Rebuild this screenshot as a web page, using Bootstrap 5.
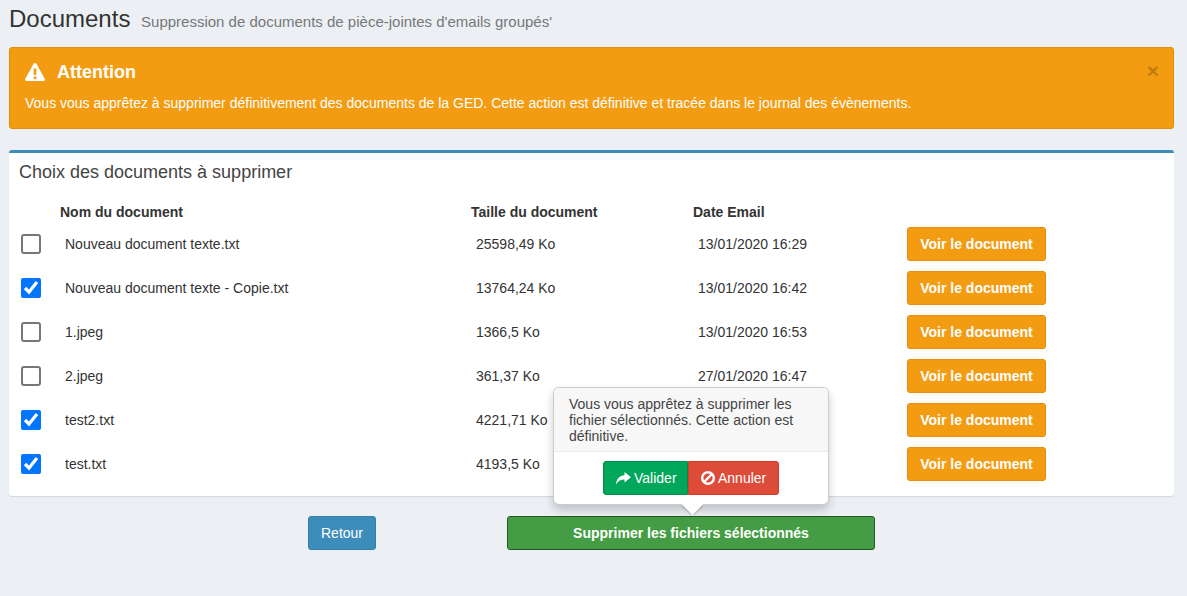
<!DOCTYPE html>
<html lang="fr">
<head>
<meta charset="utf-8">
<title>Documents</title>
<link href="https://cdn.jsdelivr.net/npm/bootstrap@5.3.0/dist/css/bootstrap.min.css" rel="stylesheet">
<style>
html,body{height:100%}
body{background:#ecf0f5;font-family:"Liberation Sans",Arial,sans-serif;font-size:14px;line-height:20px;color:#333}
.page-wrap{padding:6px 13px 0 9px}
.page-title{font-size:24px;line-height:26px;font-weight:400;margin:0;color:#333}
.page-title small{font-size:15px;color:#777;margin-left:4px;font-weight:400}
.warn-box{background:#f39c12;border:1px solid #e08e0b;border-radius:3px;color:#fff;margin:12px 0 21px;padding:14px 15px 15px;height:82px;position:relative}
.warn-title{font-size:18px;line-height:20px;font-weight:700;margin:0 0 11px;display:flex;align-items:center;gap:12px}
.warn-box p{margin:0}
.warn-close{position:absolute;top:11px;right:14px;background:none;border:0;padding:0;font-size:21px;line-height:24px;font-weight:700;color:#000;opacity:.2}
.doc-panel{background:#fff;border:0;border-top:3px solid #3c8dbc;border-radius:3px;box-shadow:0 1px 1px rgba(0,0,0,.1);height:346px;padding:0 10px}
.doc-panel h3{font-size:18px;line-height:20px;font-weight:400;color:#444;margin:0;padding:9px 0 0;height:49px}
.doc-table{table-layout:fixed;width:1040px;margin:0;--bs-table-bg:transparent;color:#333;border-collapse:collapse}
.doc-table th,.doc-table td{padding:0;border:0;vertical-align:middle;color:#333}
.doc-table th{height:20px;font-weight:700;line-height:20px}
.doc-table td{height:44px}
.doc-table td.cell-text{padding-left:5px}
.doc-table input{width:20px;height:20px;margin:0 0 0 2px;display:block}
.doc-table input:not(:checked){appearance:none;background:#fff;border:2px solid #767676;border-radius:3px}
.c-check{width:41px}.c-name{width:411px}.c-size{width:222px}.c-date{width:214px}
.btn-voir{--bs-btn-bg:#f39c12;--bs-btn-border-color:#e08e0b;--bs-btn-color:#fff;--bs-btn-hover-bg:#e08e0b;--bs-btn-hover-border-color:#e08e0b;--bs-btn-hover-color:#fff;font-size:14px;font-weight:700;line-height:20px;padding:6px 12px;border-radius:3px;width:139px;white-space:nowrap}
.action-row{margin:20px 0 0 299px;gap:131px}
.btn-retour{--bs-btn-bg:#3c8dbc;--bs-btn-border-color:#367fa9;--bs-btn-color:#fff;--bs-btn-hover-bg:#367fa9;--bs-btn-hover-color:#fff;font-size:14px;line-height:20px;padding:6px 12px;border-radius:3px;width:68px}
.btn-delete{--bs-btn-bg:#449d44;--bs-btn-border-color:#255625;--bs-btn-color:#fff;--bs-btn-hover-bg:#449d44;--bs-btn-hover-color:#fff;font-size:14px;font-weight:700;line-height:20px;padding:6px 12px;border-radius:3px;width:368px}
.delete-wrap{position:relative}
.confirm-pop{position:absolute;left:46px;bottom:45px;top:auto;width:276px;max-width:276px;font-family:"Liberation Sans",Arial,sans-serif;font-size:14px;line-height:16px;border:1px solid rgba(0,0,0,.2);border-radius:6px;box-shadow:0 5px 10px rgba(0,0,0,.2);background:#fff;color:#333}
.confirm-pop .popover-header{background:#f7f7f7;font-size:14px;font-weight:400;line-height:16px;padding:8px 14px 7px 15px;height:64px;color:#444;border-bottom:1px solid #ebebeb;border-radius:5px 5px 0 0;margin:0}
.confirm-pop .popover-header::before{display:none!important}
.confirm-pop .popover-body{padding:9px 0 0;height:52px;display:flex;justify-content:center;color:#333}
.pop-tip{position:absolute;left:127px;bottom:-11px;width:22px;height:11px;overflow:hidden}
.pop-tip::after{content:"";position:absolute;left:3.500px;top:-7.500px;width:15px;height:15px;background:#fff;transform:rotate(45deg);box-shadow:1px 1px 2px rgba(0,0,0,.25)}
.btn-ok,.btn-no{font-size:14px;line-height:20px;color:#fff;height:34px;display:inline-flex;align-items:center;gap:3px;white-space:nowrap}
.btn-ok{--bs-btn-bg:#00a65a;--bs-btn-border-color:#008d4c;--bs-btn-hover-bg:#008d4c;--bs-btn-color:#fff;--bs-btn-hover-color:#fff;border-radius:3px 0 0 3px;width:85px;padding:6px 0 6px 12px}
.btn-no{--bs-btn-bg:#dd4b39;--bs-btn-border-color:#d73925;--bs-btn-hover-bg:#d73925;--bs-btn-color:#fff;--bs-btn-hover-color:#fff;border-radius:0 3px 3px 0;width:91px;padding:6px 0 6px 12px}
</style>
</head>
<body>
<div class="page-wrap">
  <h1 class="page-title">Documents <small>Suppression de documents de pièce-jointes d'emails groupés'</small></h1>

  <div class="warn-box">
    <button type="button" class="warn-close" aria-label="Fermer">×</button>
    <h4 class="warn-title">
      <svg width="20" height="18" viewBox="0 0 20 18" aria-hidden="true"><path fill="#fff" fill-rule="evenodd" d="M10 0c.6 0 1.100.3 1.400.8l8.300 14.900c.6 1-.2 2.300-1.400 2.300H1.700C.5 18-.3 16.700.3 15.700L8.600.8C8.900.3 9.400 0 10 0zM8.500 5.500l.3 6.500h2.400l.3-6.500zM8.600 13.400v2.500h2.800v-2.500z"/></svg>
      Attention
    </h4>
    <p>Vous vous apprêtez à supprimer définitivement des documents de la GED. Cette action est définitive et tracée dans le journal des évènements.</p>
  </div>

  <div class="doc-panel">
    <h3>Choix des documents à supprimer</h3>
    <table class="table table-borderless doc-table">
      <thead>
        <tr><th class="c-check"></th><th class="c-name">Nom du document</th><th class="c-size">Taille du document</th><th class="c-date">Date Email</th><th></th></tr>
      </thead>
      <tbody>
        <tr><td><input type="checkbox" aria-label="Nouveau document texte.txt"></td><td class="cell-text">Nouveau document texte.txt</td><td class="cell-text">25598,49 Ko</td><td class="cell-text">13/01/2020 16:29</td><td><button type="button" class="btn btn-voir">Voir le document</button></td></tr>
        <tr><td><input type="checkbox" checked aria-label="Nouveau document texte - Copie.txt"></td><td class="cell-text">Nouveau document texte - Copie.txt</td><td class="cell-text">13764,24 Ko</td><td class="cell-text">13/01/2020 16:42</td><td><button type="button" class="btn btn-voir">Voir le document</button></td></tr>
        <tr><td><input type="checkbox" aria-label="1.jpeg"></td><td class="cell-text">1.jpeg</td><td class="cell-text">1366,5 Ko</td><td class="cell-text">13/01/2020 16:53</td><td><button type="button" class="btn btn-voir">Voir le document</button></td></tr>
        <tr><td><input type="checkbox" aria-label="2.jpeg"></td><td class="cell-text">2.jpeg</td><td class="cell-text">361,37 Ko</td><td class="cell-text">27/01/2020 16:47</td><td><button type="button" class="btn btn-voir">Voir le document</button></td></tr>
        <tr><td><input type="checkbox" checked aria-label="test2.txt"></td><td class="cell-text">test2.txt</td><td class="cell-text">4221,71 Ko</td><td class="cell-text"></td><td><button type="button" class="btn btn-voir">Voir le document</button></td></tr>
        <tr><td><input type="checkbox" checked aria-label="test.txt"></td><td class="cell-text">test.txt</td><td class="cell-text">4193,5 Ko</td><td class="cell-text"></td><td><button type="button" class="btn btn-voir">Voir le document</button></td></tr>
      </tbody>
    </table>
  </div>

  <div class="d-flex action-row">
    <button type="button" class="btn btn-retour">Retour</button>
    <div class="delete-wrap">
      <button type="button" class="btn btn-delete">Supprimer les fichiers sélectionnés</button>
      <div class="popover confirm-pop">
        <div class="popover-header">Vous vous apprêtez à supprimer les fichier sélectionnés. Cette action est définitive.</div>
        <div class="popover-body">
          <button type="button" class="btn btn-ok">
            <svg width="15" height="13" viewBox="0 0 15 13" aria-hidden="true"><path fill="#fff" d="M8.500 0L15 5.300 8.500 10.600V7.500C4.800 7.400 2 8.800 0 12.500 .2 7.500 3 3.500 8.500 3.200z"/></svg>
            Valider
          </button>
          <button type="button" class="btn btn-no">
            <svg width="14" height="14" viewBox="0 0 14 14" aria-hidden="true"><circle cx="7" cy="7" r="5.800" fill="none" stroke="#fff" stroke-width="2.400"/><path d="M3 11L11 3" stroke="#fff" stroke-width="2.400"/></svg>
            Annuler
          </button>
        </div>
        <div class="pop-tip"></div>
      </div>
    </div>
  </div>
</div>
<script src="https://cdn.jsdelivr.net/npm/bootstrap@5.3.0/dist/js/bootstrap.bundle.min.js"></script>
</body>
</html>
